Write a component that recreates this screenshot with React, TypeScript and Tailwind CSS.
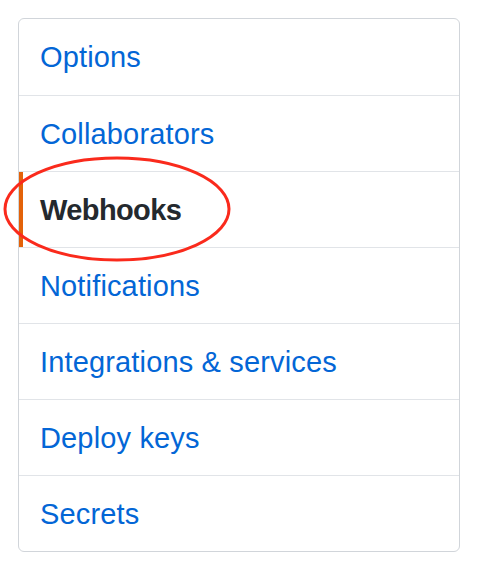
const items = [
  "Options",
  "Collaborators",
  "Webhooks",
  "Notifications",
  "Integrations & services",
  "Deploy keys",
  "Secrets",
];

export default function App() {
  return (
    <div className="relative h-[578px] w-[484px] bg-white pl-[18px] pt-[18px]" style={{ fontFamily: '"Liberation Sans", Arial, sans-serif' }}>
      <nav className="w-[442px] overflow-hidden rounded-[6px] border border-[#d1d5da] bg-white">
        {items.map((label, i) => {
          const selected = label === "Webhooks";
          return (
            <a
              key={label}
              href="#"
              className={`relative flex items-center pl-[21px] pt-[2px] text-[29px] ${i === 0 ? "h-[76px]" : "h-[76px] border-t border-[#e1e4e8]"} ${selected ? "font-semibold tracking-[-0.6px] text-[#24292e]" : "tracking-[0.15px] text-[#0366d6]"}`}
            >
              {selected && <span className="absolute bottom-0 left-0 top-0 w-[4px] bg-[#e36209]" />}
              {label}
            </a>
          );
        })}
      </nav>
      <svg className="pointer-events-none absolute left-0 top-0" width="484" height="578">
        <ellipse cx="117" cy="209" rx="112" ry="51" fill="none" stroke="#fa2a1c" strokeWidth="3" />
      </svg>
    </div>
  );
}
